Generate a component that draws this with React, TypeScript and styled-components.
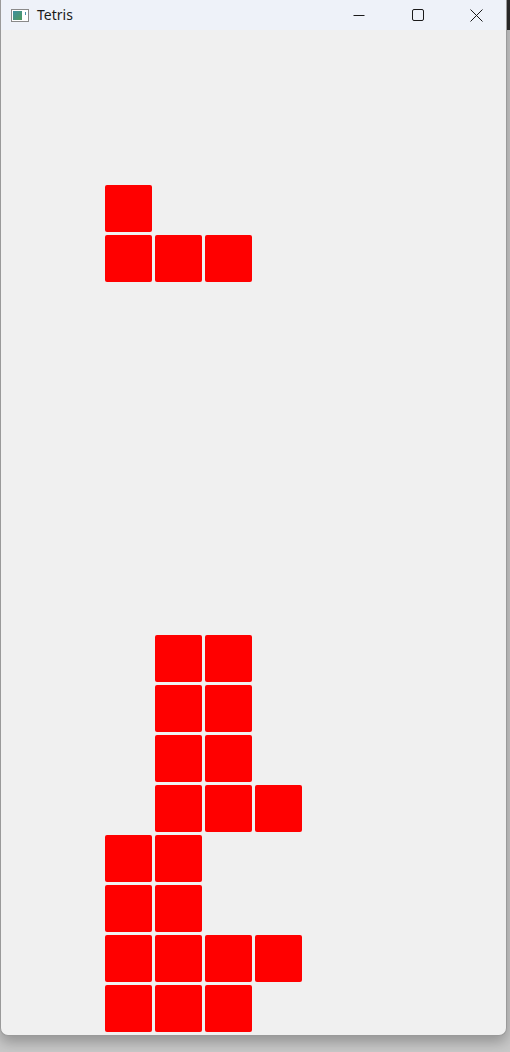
import { createGlobalStyle, styled } from "styled-components";

const GlobalStyle = createGlobalStyle`
  html, body {
    margin: 0;
    padding: 0;
  }
  body {
    background: linear-gradient(#2b2b2b 0 30px, #c9c9c9 30px);
    font-family: "Noto Sans", "Open Sans", sans-serif;
  }
`;

const Desktop = styled.div`
  width: 510px;
  height: 1052px;
  overflow: hidden;
`;

const Window = styled.div`
  width: 507px;
  height: 1036px;
  box-sizing: border-box;
  border: 1px solid #9a9a9a;
  border-top: none;
  border-radius: 0 0 8px 8px;
  background: #f0f0f0;
  box-shadow: 0 6px 14px rgba(0, 0, 0, 0.28);
  display: flex;
  flex-direction: column;
  overflow: hidden;
`;

const TitleBar = styled.div`
  height: 30px;
  flex: none;
  background: #eef2f9;
  display: flex;
  align-items: center;
  padding-left: 10px;
`;

const Title = styled.span`
  font-size: 14px;
  color: #1a1a1a;
  margin-left: 8px;
  margin-top: -1px;
  flex: 1;
`;

const Controls = styled.div`
  display: flex;
  height: 100%;
`;

const ControlButton = styled.div`
  width: 59px;
  height: 100%;
  display: flex;
  align-items: center;
  justify-content: center;
`;

const Board = styled.div`
  display: grid;
  grid-template-columns: repeat(10, 47px);
  grid-template-rows: repeat(20, 47px);
  gap: 3px;
  padding: 5px 0 0 4px;
`;

const Cell = styled.div<{ $col: number; $row: number }>`
  grid-column: ${(p) => p.$col + 1};
  grid-row: ${(p) => p.$row + 1};
  background: #ff0000;
  border-radius: 2px;
`;

// [row, cols]
const filled: [number, number[]][] = [
  [3, [2]],
  [4, [2, 3, 4]],
  [12, [3, 4]],
  [13, [3, 4]],
  [14, [3, 4]],
  [15, [3, 4, 5]],
  [16, [2, 3]],
  [17, [2, 3]],
  [18, [2, 3, 4, 5]],
  [19, [2, 3, 4]],
];

const AppIcon = () => (
  <svg width="18" height="13" viewBox="0 0 18 13">
    <rect x="0.5" y="0.5" width="17" height="12" fill="#fff" stroke="#8a8a8a" />
    <defs>
      <linearGradient id="ig" x1="0" y1="0" x2="1" y2="1">
        <stop offset="0" stopColor="#3d8fa0" />
        <stop offset="1" stopColor="#4f9a5e" />
      </linearGradient>
    </defs>
    <rect x="2" y="2" width="9" height="9" fill="url(#ig)" />
    <rect x="14" y="3" width="1" height="3" fill="#4a90a8" />
  </svg>
);

export default function App() {
  return (
    <Desktop>
      <GlobalStyle />
      <Window>
        <TitleBar>
          <AppIcon />
          <Title>Tetris</Title>
          <Controls>
            <ControlButton>
              <svg width="12" height="12" viewBox="0 0 12 12">
                <path d="M0.5 6.5H11.5" stroke="#1a1a1a" strokeWidth="1" />
              </svg>
            </ControlButton>
            <ControlButton>
              <svg width="12" height="12" viewBox="0 0 12 12">
                <rect x="0.5" y="0.5" width="11" height="11" rx="1.5" fill="none" stroke="#1a1a1a" />
              </svg>
            </ControlButton>
            <ControlButton>
              <svg width="13" height="13" viewBox="0 0 13 13">
                <path d="M0.5 0.5L12.5 12.5M12.5 0.5L0.5 12.5" stroke="#1a1a1a" strokeWidth="1" />
              </svg>
            </ControlButton>
          </Controls>
        </TitleBar>
        <Board>
          {filled.flatMap(([row, cols]) =>
            cols.map((col) => <Cell key={`${row}-${col}`} $row={row} $col={col} />)
          )}
        </Board>
      </Window>
    </Desktop>
  );
}
